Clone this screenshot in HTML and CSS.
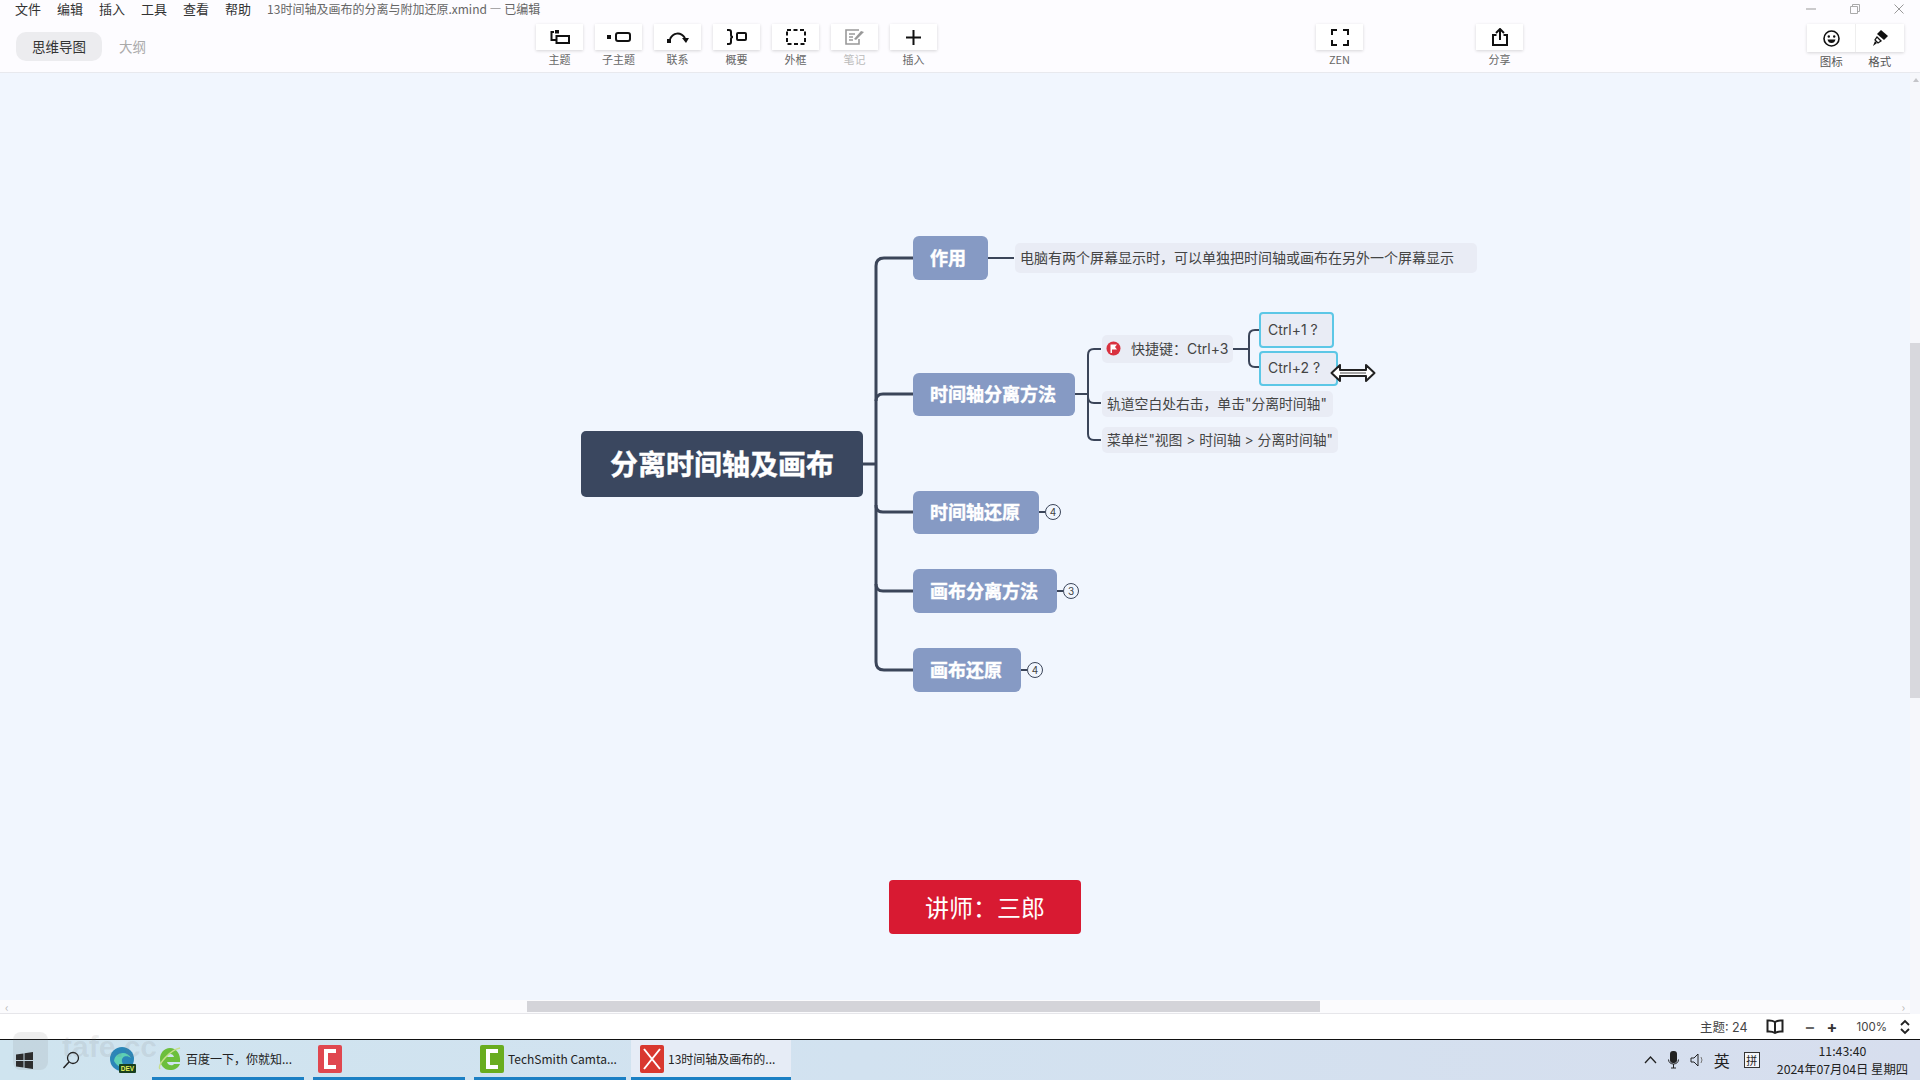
FILE: index.html
```html
<!DOCTYPE html>
<html lang="zh-CN">
<head>
    <meta charset="UTF-8">
    <title>分离时间轴及画布</title>
    <link rel="stylesheet" href="styles.css">
</head>
<body>
    <!-- Menu and title row -->
    <header class="topbar">
        <div class="menu-row">
            <nav class="menu">
                <span>文件</span><span>编辑</span><span>插入</span><span>工具</span><span>查看</span><span>帮助</span>
            </nav>
            <span class="doc-title">13时间轴及画布的分离与附加还原.xmind — 已编辑</span>
            <div class="win-controls">
                <svg width="12" height="12" viewBox="0 0 12 12"><path d="M1 6h10" stroke="#999" fill="none"/></svg>
                <svg width="12" height="12" viewBox="0 0 12 12"><path d="M1.500 3.500h7v7h-7zM3.500 3V1.500h7v7H9" stroke="#aaa" fill="none"/></svg>
                <svg width="12" height="12" viewBox="0 0 12 12"><path d="M1.500 1.500l9 9M10.500 1.500l-9 9" stroke="#999" fill="none"/></svg>
            </div>
        </div>

        <!-- Toolbar -->
        <div class="toolbar">
            <div class="tabs">
                <span class="tab active">思维导图</span>
                <span class="tab">大纲</span>
            </div>
            <div class="tools">
                <div class="tool">
                    <div class="tool-btn">
                        <svg width="20" height="14" viewBox="0 0 20 14"><rect x="6.500" y="6" width="12.500" height="7" fill="none" stroke="#111" stroke-width="2"/><rect x="5" y="0" width="4" height="3.500" fill="#111"/><path d="M4 2H1.500v8H6" fill="none" stroke="#111" stroke-width="2"/></svg>
                    </div>
                    <span>主题</span>
                </div>
                <div class="tool">
                    <div class="tool-btn">
                        <svg width="24" height="10" viewBox="0 0 24 10"><rect x="0" y="3" width="4" height="4" fill="#111"/><rect x="9" y="1" width="14" height="8" rx="2" fill="none" stroke="#111" stroke-width="2"/></svg>
                    </div>
                    <span>子主题</span>
                </div>
                <div class="tool">
                    <div class="tool-btn">
                        <svg width="22" height="14" viewBox="0 0 22 14"><rect x="0" y="9" width="4" height="4" fill="#111"/><path d="M3 9C6 3 13 1 18 8" fill="none" stroke="#111" stroke-width="2"/><path d="M15 8h7l-3 5z" fill="#111"/></svg>
                    </div>
                    <span>联系</span>
                </div>
                <div class="tool">
                    <div class="tool-btn">
                        <svg width="21" height="16" viewBox="0 0 21 16"><path d="M1 1h2q2 0 2 2v3q0 2 2 2q-2 0-2 2v3q0 2-2 2H1" fill="none" stroke="#111" stroke-width="2"/><rect x="11" y="4" width="9" height="7" rx="1" fill="none" stroke="#111" stroke-width="2"/></svg>
                    </div>
                    <span>概要</span>
                </div>
                <div class="tool">
                    <div class="tool-btn">
                        <svg width="20" height="16" viewBox="0 0 20 16"><rect x="1" y="1" width="18" height="14" fill="none" stroke="#111" stroke-width="2" stroke-dasharray="4 2.500"/></svg>
                    </div>
                    <span>外框</span>
                </div>
                <div class="tool disabled">
                    <div class="tool-btn">
                        <svg width="20" height="16" viewBox="0 0 20 16"><path d="M14 1H1v14h13v-5M4 5h6M4 8h4M4 11h4" fill="none" stroke="#999" stroke-width="1.600"/><path d="M9 10l7-8 3 1-8 8z" fill="#999"/></svg>
                    </div>
                    <span>笔记</span>
                </div>
                <div class="tool">
                    <div class="tool-btn">
                        <svg width="15" height="15" viewBox="0 0 15 15"><path d="M7.500 0v15M0 7.500h15" stroke="#111" stroke-width="2"/></svg>
                    </div>
                    <span>插入</span>
                </div>
            </div>
            <div class="tool tool-zen">
                <div class="tool-btn">
                    <svg width="18" height="17" viewBox="0 0 18 17"><path d="M1 6V1h5M12 1h5v5M17 11v5h-5M6 16H1v-5" fill="none" stroke="#111" stroke-width="2"/></svg>
                </div>
                <span>ZEN</span>
            </div>
            <div class="tool tool-share">
                <div class="tool-btn">
                    <svg width="16" height="18" viewBox="0 0 16 18"><path d="M4.500 7H1v10h14V7h-3.500" fill="none" stroke="#111" stroke-width="2"/><path d="M8 12V2M4 5l4-4 4 4" fill="none" stroke="#111" stroke-width="2"/></svg>
                </div>
                <span>分享</span>
            </div>
            <div class="side-tools">
                <div class="side-btns">
                    <div class="side-btn">
                        <svg width="17" height="17" viewBox="0 0 17 17"><circle cx="8.500" cy="8.500" r="7.500" fill="none" stroke="#111" stroke-width="1.600"/><circle cx="5.800" cy="6.500" r="1.200" fill="#111"/><circle cx="11.200" cy="6.500" r="1.200" fill="#111"/><path d="M4.500 9.500h8q-.8 3.500-4 3.500t-4-3.500z" fill="#111"/></svg>
                    </div>
                    <div class="side-btn">
                        <svg width="16" height="17" viewBox="0 0 16 17"><path d="M9 0l7 6-4 4-7-6z" fill="#111"/><path d="M5 7l4 4-3 2-3-3z" fill="none" stroke="#111" stroke-width="1.300"/><path d="M3 11l2 2-4 3z" fill="#111"/></svg>
                    </div>
                </div>
                <div class="side-labels"><span>图标</span><span>格式</span></div>
            </div>
        </div>
    </header>

    <!-- Mind map canvas -->
    <main class="canvas">
        <svg class="links" width="1910" height="929" viewBox="0 0 1910 929">
            <g fill="none" stroke="#3b4559" stroke-width="3">
                <path d="M863 391H876"/>
                <path d="M913 185H884Q876 185 876 193V589Q876 597 884 597H913"/>
                <path d="M913 321H883Q876 321 876 328"/>
                <path d="M913 439H883Q876 439 876 432"/>
                <path d="M913 518H883Q876 518 876 511"/>
            </g>
            <g fill="none" stroke="#3b4559" stroke-width="2">
                <path d="M988 185H1014"/>
                <path d="M1075 321H1088"/>
                <path d="M1101 276H1094Q1088 276 1088 282V361Q1088 367 1094 367H1101"/>
                <path d="M1101 330H1094Q1088 330 1088 324"/>
                <path d="M1233 276H1249"/>
                <path d="M1262 257H1255Q1249 257 1249 263V288Q1249 294 1255 294H1262"/>
                <path d="M1039 439H1045"/>
                <path d="M1057 518H1063"/>
                <path d="M1021 597H1027"/>
            </g>
        </svg>

        <div class="node root">分离时间轴及画布</div>

        <div class="node main n-use">作用</div>
        <div class="node main n-split">时间轴分离方法</div>
        <div class="node main n-restore">时间轴还原</div>
        <div class="node main n-canvas">画布分离方法</div>
        <div class="node main n-canvas-restore">画布还原</div>

        <span class="fold f-restore">4</span>
        <span class="fold f-canvas">3</span>
        <span class="fold f-canvas-restore">4</span>

        <div class="node sub n-desc">电脑有两个屏幕显示时，可以单独把时间轴或画布在另外一个屏幕显示</div>
        <div class="node sub n-key">
            <svg class="flag" width="15" height="15" viewBox="0 0 15 15"><circle cx="7.500" cy="7.500" r="7" fill="#d9313f"/><path d="M4.500 3.500h6.500l-2 2.500 2 2.500H6v3.500H4.500z" fill="#fff"/></svg>
            快捷键：Ctrl+3
        </div>
        <div class="node sub picked n-ctrl1">Ctrl+1 ?</div>
        <div class="node sub picked n-ctrl2">Ctrl+2 ?</div>
        <div class="node sub n-track">轨道空白处右击，单击"分离时间轴"</div>
        <div class="node sub n-menu">菜单栏"视图 &gt; 时间轴 &gt; 分离时间轴"</div>

        <!-- Resize cursor over the selected topic -->
        <svg class="cursor" width="46" height="20" viewBox="0 0 46 20"><path d="M1.500 10L10 2v5h26V2l8.500 8L36 18v-5H10v5z" fill="#fff" stroke="#222" stroke-width="2" stroke-linejoin="round"/><path d="M10 10h26" stroke="#888" stroke-width="1.500"/></svg>

        <div class="lecturer">讲师：三郎</div>

        <!-- Scrollbars -->
        <div class="vscroll"><div class="vthumb"></div></div>
        <div class="hscroll">
            <span class="arrow">‹</span>
            <div class="hthumb"></div>
            <span class="arrow arrow-right">›</span>
        </div>
    </main>

    <!-- Status bar -->
    <footer class="statusbar">
        <span class="topic-count">主题: 24</span>
        <svg class="book" width="18" height="15" viewBox="0 0 18 15"><path d="M9 3Q6 1 1.500 1.500V12.500Q6 12 9 14Q12 12 16.500 12.500V1.500Q12 1 9 3V14" fill="none" stroke="#222" stroke-width="2"/></svg>
        <span class="zoom-btn zoom-minus">−</span>
        <span class="zoom-btn">+</span>
        <span class="zoom-val">100%</span>
        <svg width="10" height="16" viewBox="0 0 10 16"><path d="M1 6l4-4 4 4M1 10l4 4 4-4" fill="none" stroke="#222" stroke-width="1.800"/></svg>
    </footer>

    <!-- Windows taskbar -->
    <div class="taskbar">
        <div class="watermark">tafe.cc</div>
        <svg class="start" width="17" height="17" viewBox="0 0 17 17"><path d="M0 2.500l7.500-1v6.500H0zM8.500 1.300L17 0v8H8.500zM0 9h7.500v6.500l-7.500-1zM8.500 9H17v8l-8.500-1.300z" fill="#222"/></svg>
        <svg class="search" width="18" height="18" viewBox="0 0 18 18"><circle cx="11" cy="7" r="5.500" fill="none" stroke="#222" stroke-width="1.300"/><path d="M7 11l-5.500 6" stroke="#222" stroke-width="1.500"/></svg>
        <svg class="edge" width="26" height="26" viewBox="0 0 26 26"><circle cx="12" cy="12" r="12" fill="#2b86b8"/><path d="M4 14C5 5 17 3 21 11c-4-3-10-2-9 4 1 4 6 5 10 3-3 5-13 5-18-4z" fill="#5ed0b4"/><rect x="9" y="17" width="17" height="9" rx="1" fill="#173f1e"/><text x="17.500" y="24" class="dev-text">DEV</text></svg>
        <div class="task-btn task-ie">
            <svg width="24" height="28" viewBox="0 0 24 28"><path d="M12 3C6 3 2 8 2 14s4 11 10 11c5 0 8-2 10-6h-6c-1 2-6 2-7-2h13c1-8-4-14-10-14zM9 12c1-4 6-4 7 0z" fill="#6cbf3c"/><path d="M2 24C-1 20 12 5 22 3" fill="none" stroke="#c6e08a" stroke-width="1.500"/></svg>
            <span>百度一下，你就知...</span>
        </div>
        <div class="task-btn task-cam">
            <svg width="24" height="28" viewBox="0 0 24 28"><rect width="24" height="28" rx="2" fill="#e0474f"/><path d="M18 6H8v16h10" fill="none" stroke="#fff" stroke-width="4"/></svg>
        </div>
        <div class="task-btn task-tech">
            <svg width="24" height="28" viewBox="0 0 24 28"><rect width="24" height="28" rx="2" fill="#69ad1f"/><path d="M18 6H8v16h10" fill="none" stroke="#fff" stroke-width="4"/></svg>
            <span>TechSmith Camta...</span>
        </div>
        <div class="task-btn task-xmind active">
            <svg width="24" height="28" viewBox="0 0 24 28"><rect width="24" height="28" rx="2" fill="#d9382f"/><path d="M4 4l16 20M20 4L4 24" fill="none" stroke="#fff" stroke-width="2"/></svg>
            <span>13时间轴及画布的...</span>
        </div>

        <div class="tray">
            <svg width="13" height="8" viewBox="0 0 13 8"><path d="M1 7l5.500-6L12 7" fill="none" stroke="#222" stroke-width="1.300"/></svg>
            <svg width="11" height="18" viewBox="0 0 11 18"><rect x="2" y="0" width="7" height="12" rx="3" fill="#222"/><path d="M.5 8.500c0 6 10 6 10 0M5.500 13v4M3 17h5" fill="none" stroke="#222"/></svg>
            <svg width="16" height="14" viewBox="0 0 16 14"><path d="M1 5v4h3l4 4V1L4 5z" fill="none" stroke="#222"/><path d="M11 4q2 3 0 6" fill="none" stroke="#777"/></svg>
            <span class="ime">英</span>
            <span class="ime-box">拼</span>
            <div class="clock">
                <span>11:43:40</span>
                <span>2024年07月04日 星期四</span>
            </div>
        </div>
    </div>
</body>
</html>
```

FILE: styles.css
```css
/* Page frame */
html, body {
    margin: 0;
    padding: 0;
}
body {
    width: 1920px;
    height: 1080px;
    overflow: hidden;
    display: flex;
    flex-direction: column;
    font-family: "Noto Sans CJK SC", "Noto Sans", sans-serif;
    color: #333;
    background-color: #fff;
}

/* Top bar */
.topbar {
    height: 73px;
    flex: none;
    background-color: #fdfcff;
    border-bottom: 1px solid #e8e9ee;
    box-sizing: border-box;
}
.menu-row {
    height: 18px;
    display: flex;
    align-items: center;
    padding-left: 15px;
    font-size: 13px;
    line-height: 18px;
}
.menu {
    display: flex;
    gap: 16px;
}
.doc-title {
    margin-left: 16px;
    font-size: 12px;
    color: #666;
}
.win-controls {
    margin-left: auto;
    margin-right: 15px;
    display: flex;
    gap: 32px;
}
.toolbar {
    display: flex;
    align-items: flex-start;
}
.tabs {
    flex: 0 0 536px;
    box-sizing: border-box;
    padding: 14px 0 0 16px;
    display: flex;
    align-items: center;
    gap: 2px;
}
.tab {
    height: 29px;
    line-height: 28px;
    padding: 0 15px;
    font-size: 13.500px;
    color: #aaa;
    border-radius: 10px;
}
.tab.active {
    color: #333;
    background-color: #ececef;
    width: 56px;
    text-align: center;
}
.tools {
    display: flex;
    gap: 12px;
}
.tool {
    width: 47px;
    display: flex;
    flex-direction: column;
    align-items: center;
    font-size: 11px;
    line-height: 16px;
    color: #666;
}
.tool.disabled {
    color: #bbb;
}
.tool-btn {
    margin-top: 6px;
    width: 47px;
    height: 26px;
    display: flex;
    align-items: center;
    justify-content: center;
    background-color: #fff;
    box-shadow: 0 1px 3px rgba(0, 0, 0, 0.16);
    margin-bottom: 1px;
}
.tool-zen {
    margin-left: 379px;
}
.tool-share {
    margin-left: 113px;
}
.side-tools {
    margin-left: 284px;
    margin-top: 6px;
    width: 97px;
}
.side-btns {
    display: flex;
    height: 28px;
    background-color: #fff;
    box-shadow: 0 1px 3px rgba(0, 0, 0, 0.16);
}
.side-btn {
    flex: 1;
    display: flex;
    align-items: center;
    justify-content: center;
}
.side-btn + .side-btn {
    border-left: 1px solid #eee;
}
.side-labels {
    display: flex;
    margin-top: 1px;
    font-size: 11.500px;
    line-height: 16px;
    color: #555;
}
.side-labels span {
    flex: 1;
    text-align: center;
}

/* Mind map */
.canvas {
    position: relative;
    flex: 1;
    background-color: #f1f6fe;
}
.links {
    position: absolute;
    left: 0;
    top: 0;
}
.node {
    position: absolute;
    box-sizing: border-box;
    display: flex;
    align-items: center;
    padding-bottom: 2px;
    font-family: "Inter", "Noto Sans CJK SC", sans-serif;
}
.root {
    left: 581px;
    top: 358px;
    width: 282px;
    height: 66px;
    justify-content: center;
    background-color: #3a475f;
    color: #fff;
    font-size: 28px;
    font-weight: 700;
    -webkit-text-stroke: 0.4px #fff;
    border-radius: 5px;
}
.main {
    left: 913px;
    height: 43px;
    padding-left: 17px;
    padding-bottom: 3px;
    background-color: #869ac4;
    color: #fff;
    font-size: 18px;
    font-weight: 700;
    -webkit-text-stroke: 0.4px #fff;
    border-radius: 6px;
}
.n-use { top: 163px; width: 75px; height: 44px; }
.n-split { top: 300px; width: 162px; }
.n-restore { top: 418px; width: 126px; }
.n-canvas { top: 496px; width: 144px; height: 44px; }
.n-canvas-restore { top: 575px; width: 108px; height: 44px; }

.sub {
    background-color: #e9ecf5;
    color: #444;
    font-size: 14px;
    border-radius: 5px;
    padding-left: 5px;
}
.n-desc { left: 1015px; top: 170px; width: 462px; height: 30px; }
.n-key { left: 1102px; top: 262px; width: 131px; height: 28px; padding-left: 4px; }
.n-track { left: 1102px; top: 318px; width: 231px; height: 26px; font-size: 13.800px; }
.n-menu { left: 1102px; top: 354px; width: 236px; height: 26px; font-size: 13.800px; }
.flag {
    margin-right: 10px;
}
.picked {
    left: 1259px;
    height: 36px;
    padding-left: 7px;
    border: 2px solid #5cc7e6;
    border-radius: 4px;
}
.n-ctrl1 { top: 239px; width: 75px; }
.n-ctrl2 { top: 278px; width: 79px; height: 35px; }

.fold {
    position: absolute;
    box-sizing: border-box;
    width: 16px;
    height: 16px;
    border: 1px solid #3b4559;
    border-radius: 50%;
    background-color: #f1f6fe;
    font-family: "Inter", sans-serif;
    font-size: 10px;
    line-height: 14px;
    text-align: center;
    color: #444;
}
.f-restore { left: 1045px; top: 431px; }
.f-canvas { left: 1063px; top: 510px; }
.f-canvas-restore { left: 1027px; top: 589px; }

.cursor {
    position: absolute;
    left: 1330px;
    top: 290px;
}
.lecturer {
    position: absolute;
    left: 889px;
    top: 807px;
    width: 192px;
    height: 54px;
    line-height: 54px;
    text-align: center;
    background-color: #d81a32;
    color: #fff;
    font-size: 24px;
    border-radius: 4px;
}

/* Scrollbars */
.vscroll {
    position: absolute;
    right: 0;
    top: 0;
    bottom: 0;
    width: 10px;
    background-color: #f6f7fb;
}
.vscroll::before {
    content: "";
    position: absolute;
    left: 3px;
    top: 5px;
    border-left: 3px solid transparent;
    border-right: 3px solid transparent;
    border-bottom: 4px solid #c4c4c8;
}
.vthumb {
    margin-top: 270px;
    height: 355px;
    background-color: #d8d8dd;
}
.hscroll {
    position: absolute;
    left: 0;
    right: 10px;
    bottom: 0;
    height: 13px;
    display: flex;
    align-items: center;
    background-color: #fbfbfd;
    border-bottom: 1px solid #e6e6ea;
}
.hthumb {
    position: absolute;
    left: 527px;
    width: 793px;
    top: 1px;
    bottom: 1px;
    background-color: #d4d4d9;
}
.arrow {
    margin-left: 5px;
    font-size: 12px;
    color: #bbb;
}
.arrow-right {
    margin-left: auto;
    margin-right: 5px;
}

/* Status bar */
.statusbar {
    height: 25px;
    flex: none;
    display: flex;
    align-items: center;
    padding-right: 10px;
    justify-content: flex-end;
    background-color: #fff;
    font-family: "Inter", "Noto Sans CJK SC", sans-serif;
    font-size: 12.500px;
    color: #444;
}
.book {
    margin-left: 18px;
}
.zoom-btn {
    margin-left: 12px;
    width: 10px;
    text-align: center;
    font-size: 16px;
    font-weight: 700;
    color: #333;
}
.zoom-minus {
    margin-left: 21px;
    color: #666;
}
.zoom-val {
    margin: 0 13px 0 20px;
    font-size: 11.500px;
}

/* Taskbar */
.taskbar {
    position: relative;
    height: 41px;
    flex: none;
    display: flex;
    align-items: center;
    box-sizing: border-box;
    border-top: 1px solid #111;
    background: linear-gradient(90deg, #cfe4ef 0%, #d2e2f0 45%, #d7deee 100%);
    font-size: 12px;
    color: #222;
}
.watermark {
    position: absolute;
    left: 62px;
    top: -10px;
    font-family: "Liberation Sans", sans-serif;
    font-size: 30px;
    font-weight: 700;
    color: rgba(120, 120, 120, 0.13);
}
.watermark::before {
    content: "";
    position: absolute;
    left: -49px;
    top: 2px;
    width: 35px;
    height: 38px;
    border-radius: 8px;
    background-color: rgba(120, 120, 120, 0.13);
}
.start {
    margin-left: 16px;
}
.search {
    margin-left: 29px;
}
.edge {
    margin-left: 30px;
}
.dev-text {
    font-family: "Liberation Sans", sans-serif;
    font-size: 6.500px;
    font-weight: 700;
    fill: #e6f25c;
    text-anchor: middle;
}
.task-btn {
    height: 40px;
    box-sizing: border-box;
    width: 152px;
    display: flex;
    align-items: center;
    gap: 4px;
    padding-left: 6px;
    border-bottom: 3px solid #1c80c4;
}
.task-ie {
    margin-left: 16px;
}
.task-cam {
    margin-left: 9px;
    padding-left: 5px;
}
.task-tech {
    margin-left: 9px;
    padding-left: 6px;
}
.task-xmind {
    margin-left: 5px;
    width: 160px;
    padding-left: 9px;
}
.task-btn.active {
    background-color: #e6ecf6;
}
.tray {
    margin-left: auto;
    margin-right: 12px;
    display: flex;
    align-items: center;
    gap: 11px;
}
.ime {
    margin: 0 3px 0 -3px;
    font-size: 16px;
}
.ime-box {
    box-sizing: border-box;
    width: 16px;
    height: 16px;
    border: 1px solid #333;
    background-color: #f4f6fa;
    font-size: 11px;
    line-height: 14px;
    text-align: center;
}
.clock {
    margin-left: 6px;
    display: flex;
    flex-direction: column;
    align-items: center;
    font-size: 12.300px;
    line-height: 18px;
}
```
